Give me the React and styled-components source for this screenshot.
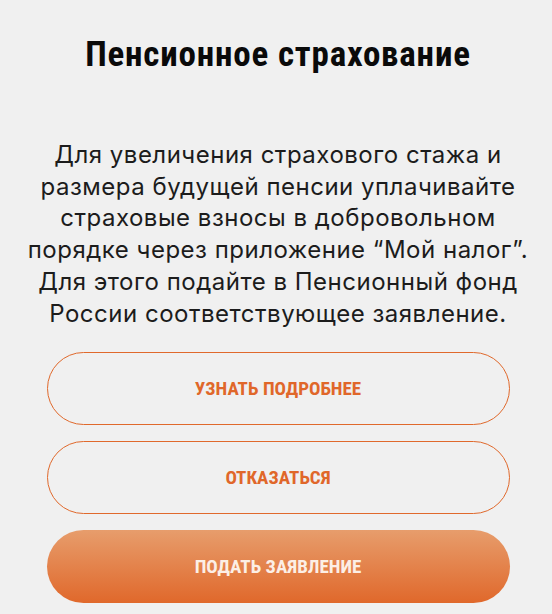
import React from "react";
import styled, { createGlobalStyle } from "styled-components";

const GlobalStyle = createGlobalStyle`
  html, body {
    margin: 0;
    padding: 0;
    background: #f0f0f0;
  }
`;

const Screen = styled.div`
  display: flex;
  flex-direction: column;
  align-items: center;
  width: 552px;
  height: 614px;
  box-sizing: border-box;
  padding: 33px 0 0 4px;
  background: #f0f0f0;
  overflow: hidden;
`;

const Title = styled.h1`
  margin: 0;
  font-family: "Roboto Condensed", "Roboto", sans-serif;
  font-stretch: condensed;
  font-weight: 700;
  font-size: 35px;
  line-height: 44px;
  letter-spacing: 0.8px;
  color: #0a0a0a;
  text-align: center;
  white-space: nowrap;
`;

const Description = styled.p`
  margin: 62px 0 0;
  font-family: "Inter", "Roboto", sans-serif;
  font-weight: 400;
  font-size: 24px;
  line-height: 31.7px;
  letter-spacing: 0.5px;
  color: #1c1c1c;
  text-align: center;
  white-space: nowrap;
`;

const Actions = styled.div`
  display: flex;
  flex-direction: column;
  gap: 16px;
  width: 463px;
  margin-top: 23px;
`;

const ActionButton = styled.button`
  display: flex;
  align-items: center;
  justify-content: center;
  height: 73px;
  padding: 0;
  border-radius: 37px;
  box-sizing: border-box;
  border: ${p => (p.$primary ? "none" : "1.5px solid #e0692c")};
  background: ${p =>
    p.$primary ? "linear-gradient(180deg, #e79d6c 0%, #e0682b 100%)" : "transparent"};
  color: ${p => (p.$primary ? "#fcefe6" : "#e0672a")};
  font-family: "Roboto Condensed", "Roboto", sans-serif;
  font-stretch: condensed;
  font-weight: 700;
  font-size: 19px;
  cursor: pointer;
`;

export default function App() {
  return (
    <>
      <GlobalStyle />
      <Screen>
        <Title>Пенсионное страхование</Title>
        <Description>
          Для увеличения страхового стажа и<br />
          размера будущей пенсии уплачивайте<br />
          страховые взносы в добровольном<br />
          порядке через приложение “Мой налог”.<br />
          Для этого подайте в Пенсионный фонд<br />
          России соответствующее заявление.
        </Description>
        <Actions>
          <ActionButton>УЗНАТЬ ПОДРОБНЕЕ</ActionButton>
          <ActionButton>ОТКАЗАТЬСЯ</ActionButton>
          <ActionButton $primary>ПОДАТЬ ЗАЯВЛЕНИЕ</ActionButton>
        </Actions>
      </Screen>
    </>
  );
}
